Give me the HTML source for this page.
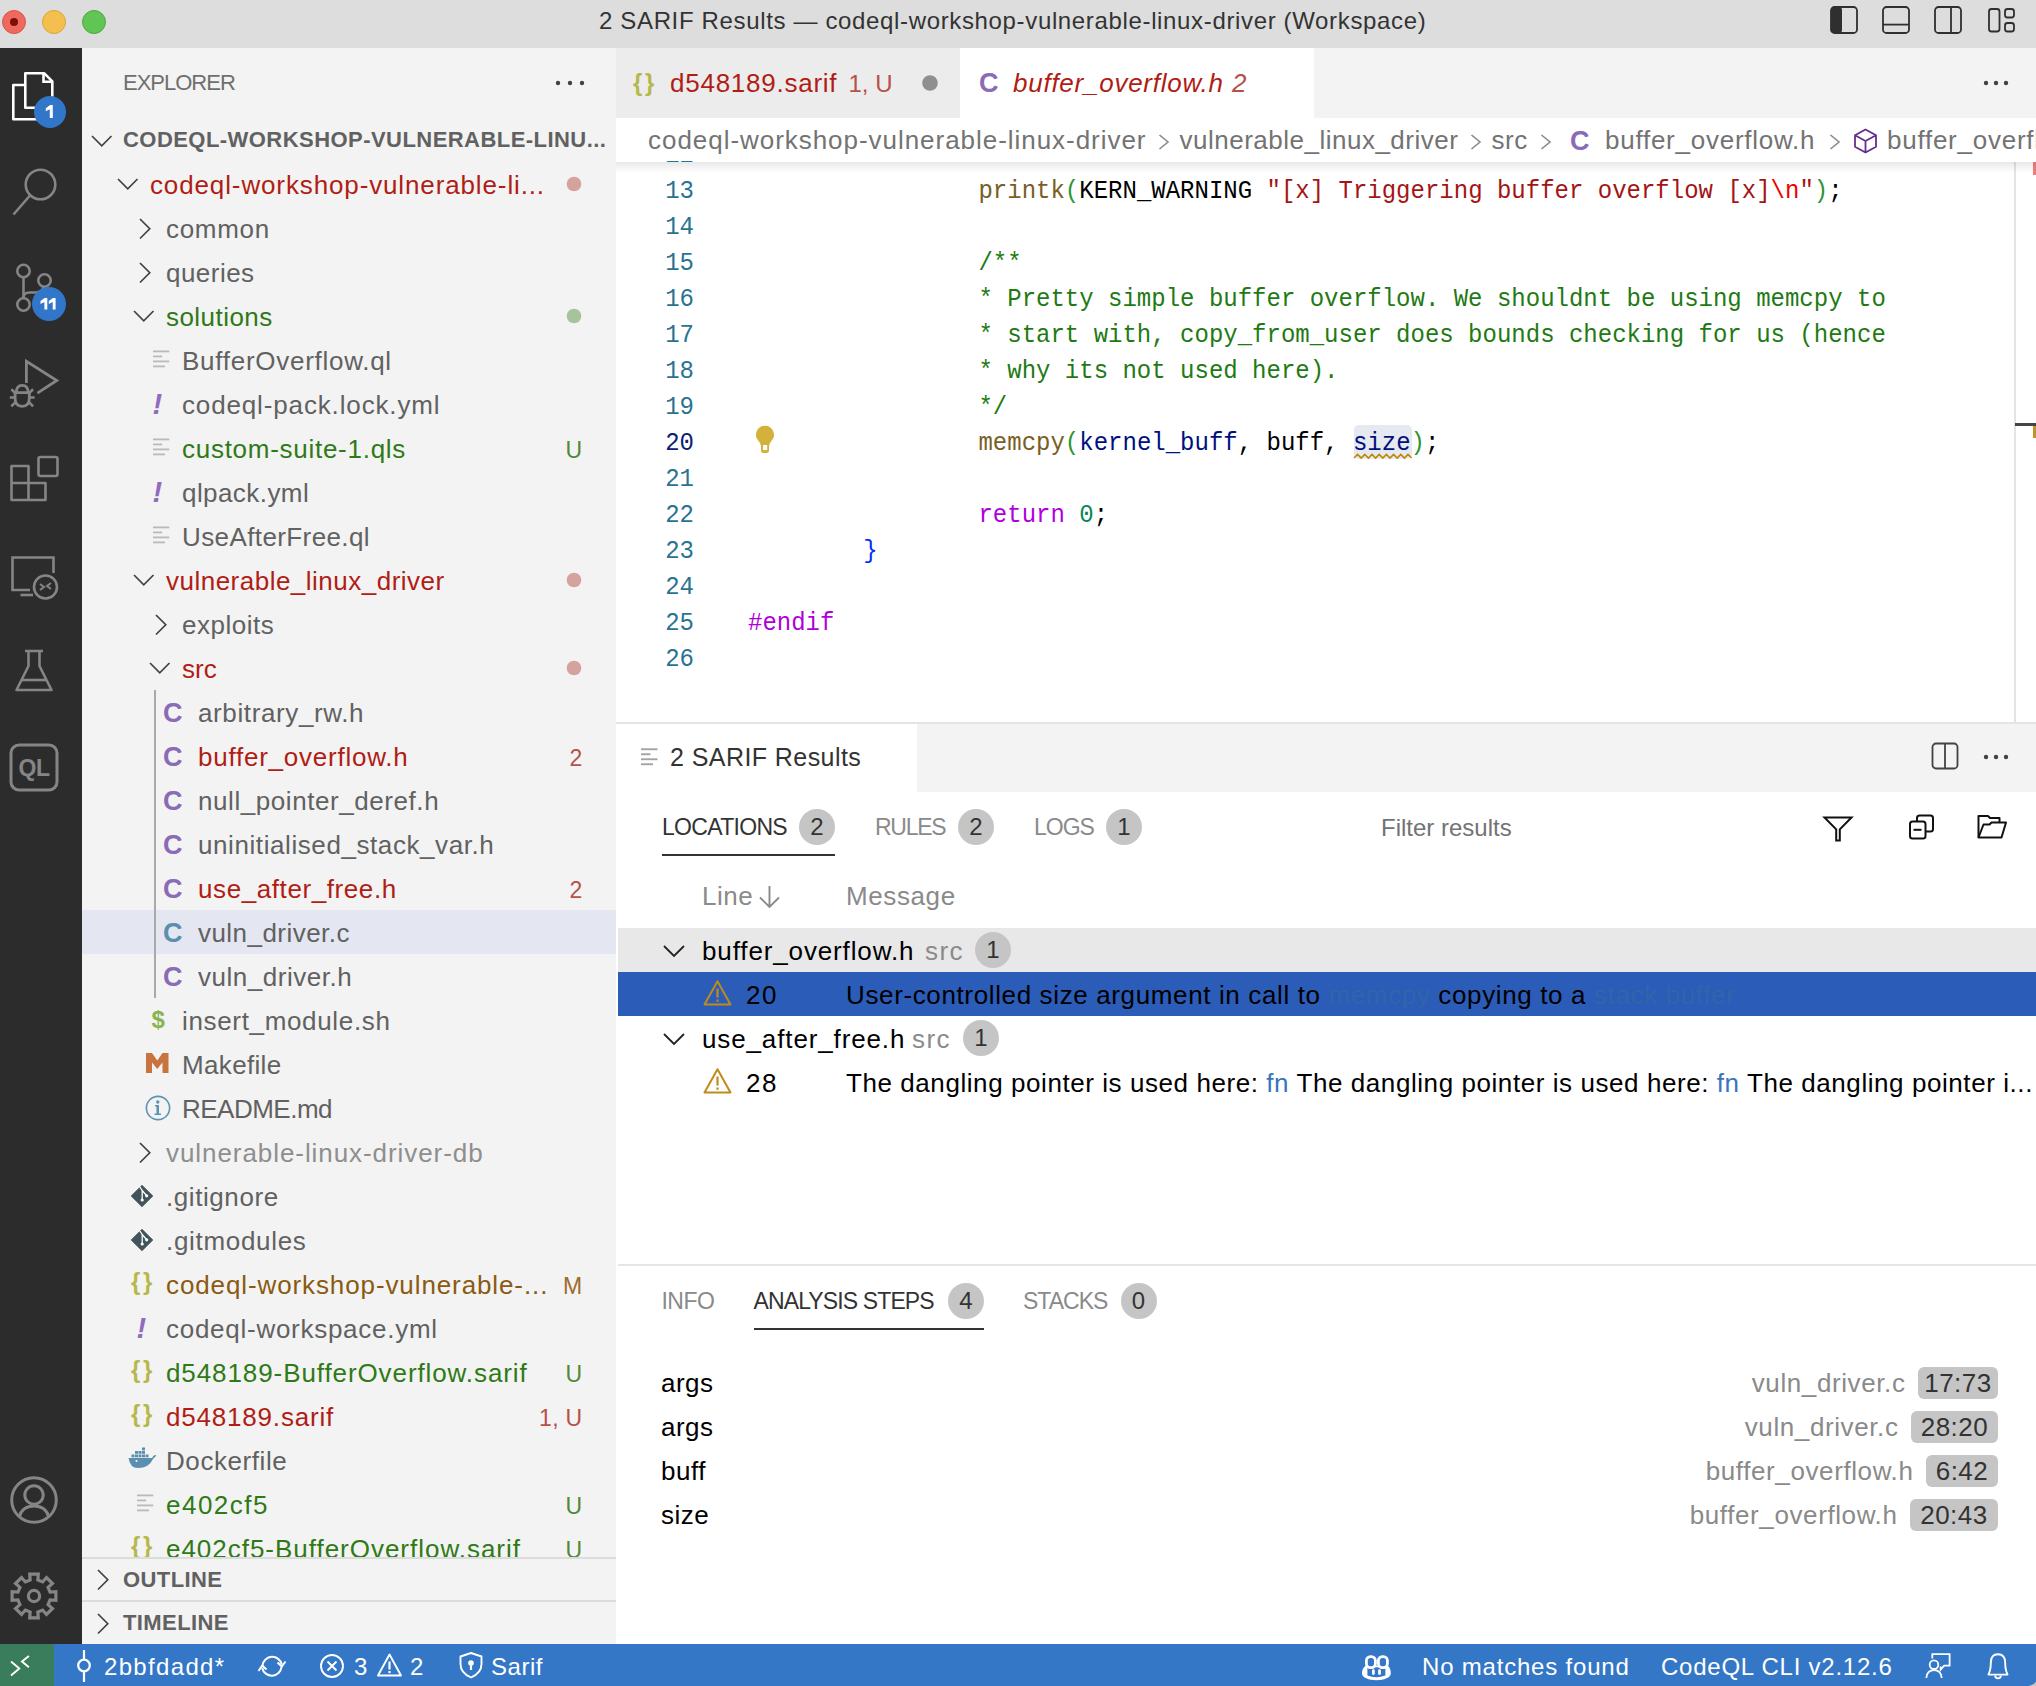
<!DOCTYPE html>
<html><head><meta charset="utf-8"><title>VS Code</title>
<style>
html,body{margin:0;padding:0;overflow:hidden;}
body{width:2036px;height:1686px;position:relative;overflow:hidden;background:#fff;font-family:"Liberation Sans",sans-serif;}
.a{position:absolute;}
.t{position:absolute;white-space:pre;line-height:1;}
svg{position:absolute;overflow:visible;}
</style></head>
<body>
<div class="a" style="left:0px;top:0px;width:2036px;height:48px;background:#dddddd;"></div>
<svg style="left:0px;top:0px;" width="120" height="48" viewBox="0 0 120 48"><circle cx="14" cy="22" r="11.5" fill="#ee6a5f" stroke="#d9544a" stroke-width="1"/><circle cx="14" cy="22" r="4" fill="#7e0f06"/><circle cx="54" cy="22" r="11.5" fill="#f5bf4f" stroke="#dba43a" stroke-width="1"/><circle cx="94" cy="22" r="11.5" fill="#61c554" stroke="#4ea83f" stroke-width="1"/></svg>
<div class="t" style="left:599px;top:8.68px;font-size:24px;color:#333333;font-family:'Liberation Sans',sans-serif;letter-spacing:0.65px;">2 SARIF Results — codeql-workshop-vulnerable-linux-driver (Workspace)</div>
<svg style="left:1820px;top:0px;" width="210" height="48" viewBox="0 0 210 48"><rect x="11" y="7" width="26" height="26" rx="3.5" fill="none" stroke="#2f2f2f" stroke-width="1.8"/><rect x="11" y="7" width="11" height="26" rx="3" fill="#2f2f2f"/><rect x="63" y="7" width="26" height="26" rx="3.5" fill="none" stroke="#2f2f2f" stroke-width="1.8"/><line x1="63" y1="24.6" x2="89" y2="24.6" stroke="#2f2f2f" stroke-width="1.8"/><rect x="115" y="7" width="26" height="26" rx="3.5" fill="none" stroke="#2f2f2f" stroke-width="1.8"/><line x1="131" y1="7" x2="131" y2="33" stroke="#2f2f2f" stroke-width="1.8"/><rect x="169" y="9" width="10.5" height="22.5" rx="2.5" fill="none" stroke="#2f2f2f" stroke-width="1.8"/><rect x="185" y="9" width="9" height="8.5" rx="2.5" fill="none" stroke="#2f2f2f" stroke-width="1.8"/><rect x="185" y="23" width="9" height="8.5" rx="2.5" fill="none" stroke="#2f2f2f" stroke-width="1.8"/></svg>
<div class="a" style="left:0px;top:48px;width:82px;height:1596px;background:#2c2c2c;"></div>
<svg style="left:0px;top:48px;" width="82" height="90" viewBox="0 0 82 90"><path d="M25.3 25.3 h19 l8 8 v26.5 h-27 z" fill="none" stroke="#fff" stroke-width="2.6" stroke-linejoin="round"/><path d="M43.5 25.3 v8.5 h8.5" fill="none" stroke="#fff" stroke-width="2.6"/><path d="M25.3 37 h-12 v34.2 h23.5 v-11.4" fill="none" stroke="#fff" stroke-width="2.6" stroke-linejoin="round"/><circle cx="50" cy="64" r="16" fill="#3176c9"/><path d="M45.8 60.3 L50.2 57 H52.8 V70 H49.8 V61.2 L45.8 63.3 Z" fill="#fff"/></svg>
<svg style="left:0px;top:150px;" width="82" height="80" viewBox="0 0 82 80"><circle cx="40.5" cy="34.5" r="14.8" fill="none" stroke="#858585" stroke-width="2.6"/><line x1="30" y1="45.5" x2="13.5" y2="64.5" stroke="#858585" stroke-width="2.6"/></svg>
<svg style="left:0px;top:250px;" width="82" height="80" viewBox="0 0 82 80"><circle cx="23.5" cy="21" r="6.2" fill="none" stroke="#858585" stroke-width="2.6"/><circle cx="44.5" cy="30.5" r="6.2" fill="none" stroke="#858585" stroke-width="2.6"/><circle cx="23.5" cy="54.5" r="6.2" fill="none" stroke="#858585" stroke-width="2.6"/><path d="M23.5 27.2 v21" stroke="#858585" stroke-width="2.6" fill="none"/><path d="M23.5 47.5 Q23.5 42.5 29.5 42.5 H36 Q42.5 42.5 43.8 36.6" stroke="#858585" stroke-width="2.6" fill="none"/><circle cx="49" cy="54" r="17" fill="#3176c9"/><path d="M40.5 51 L44.6 48 H47.3 V59.5 H44.4 V52 L40.5 54 Z M48.8 51 L52.9 48 H55.6 V59.5 H52.7 V52 L48.8 54 Z" fill="#fff"/></svg>
<svg style="left:0px;top:350px;" width="82" height="80" viewBox="0 0 82 80"><path d="M26.4 33 V11.3 L56.8 30.5 L37.4 43.2" fill="none" stroke="#858585" stroke-width="2.8" stroke-linejoin="miter"/><path d="M16.3 42.7 Q16.3 35.4 22.2 35.4 Q28.1 35.4 28.1 42.7" fill="none" stroke="#858585" stroke-width="2.8"/><path d="M15.1 42.7 V48.5 Q15.1 56.3 22.2 56.3 Q29.3 56.3 29.3 48.5 V42.7 Z" fill="none" stroke="#858585" stroke-width="2.8"/><path d="M11.3 39.3 L15.5 43.3 M33.1 39.3 L28.9 43.3 M9.8 47.5 H15 M29.4 47.5 H34.6 M11.3 56.3 L15.5 52.1 M33.1 56.3 L28.9 52.1" stroke="#858585" stroke-width="2.6" fill="none"/></svg>
<svg style="left:0px;top:440px;" width="82" height="80" viewBox="0 0 82 80"><path d="M11.5 26 h17 v17 h17 v17 h-34 z M28.5 43 h-17 M28.5 43 v17" fill="none" stroke="#858585" stroke-width="2.6" stroke-linejoin="round"/><rect x="38.5" y="17" width="19" height="19" rx="2" fill="none" stroke="#858585" stroke-width="2.6"/></svg>
<svg style="left:0px;top:540px;" width="82" height="80" viewBox="0 0 82 80"><path d="M30 50 H12.5 V17.5 H53.5 V33" fill="none" stroke="#858585" stroke-width="2.6"/><path d="M20.5 55 H33" stroke="#858585" stroke-width="2.6"/><circle cx="45.5" cy="47" r="11.5" fill="none" stroke="#858585" stroke-width="2.6"/><path d="M40 44 l4 3 l-4 3 M51 43 l-4 3 l4 3" stroke="#858585" stroke-width="2" fill="none"/></svg>
<svg style="left:0px;top:640px;" width="82" height="70" viewBox="0 0 82 70"><path d="M25 11 h18 M28.5 11 v15 L16.5 50 h35 L39.5 26 V11" fill="none" stroke="#858585" stroke-width="2.6" stroke-linejoin="round"/><path d="M22 40 h24" stroke="#858585" stroke-width="2.6"/></svg>
<svg style="left:0px;top:740px;" width="82" height="60" viewBox="0 0 82 60"><rect x="11" y="5" width="46" height="45" rx="8" fill="none" stroke="#858585" stroke-width="3"/><text x="34" y="35.5" text-anchor="middle" style="font-family:Liberation Sans;font-weight:bold;font-size:23px;letter-spacing:-0.5px" fill="#858585">QL</text></svg>
<svg style="left:0px;top:1470px;" width="82" height="60" viewBox="0 0 82 60"><circle cx="34" cy="30" r="22.3" fill="none" stroke="#858585" stroke-width="3"/><circle cx="34" cy="25" r="9.2" fill="none" stroke="#858585" stroke-width="3"/><path d="M19 47.5 q3 -11.5 15 -11.5 q12 0 15 11.5" fill="none" stroke="#858585" stroke-width="3"/></svg>
<svg style="left:0px;top:1566px;" width="82" height="60" viewBox="0 0 82 60"><path d="M29.74,8.11 L38.26,8.11 L37.85,13.96 L42.62,15.93 L46.47,11.51 L52.49,17.53 L48.07,21.38 L50.04,26.15 L55.89,25.74 L55.89,34.26 L50.04,33.85 L48.07,38.62 L52.49,42.47 L46.47,48.49 L42.62,44.07 L37.85,46.04 L38.26,51.89 L29.74,51.89 L30.15,46.04 L25.38,44.07 L21.53,48.49 L15.51,42.47 L19.93,38.62 L17.96,33.85 L12.11,34.26 L12.11,25.74 L17.96,26.15 L19.93,21.38 L15.51,17.53 L21.53,11.51 L25.38,15.93 L30.15,13.96 Z" fill="none" stroke="#858585" stroke-width="3.2" stroke-linejoin="miter"/><circle cx="34" cy="30" r="5.6" fill="none" stroke="#858585" stroke-width="3.2"/></svg>
<div class="a" style="left:82px;top:48px;width:534px;height:1596px;background:#f3f3f3;"></div>
<div class="t" style="left:123px;top:72.38px;font-size:22px;color:#6f6f6f;font-family:'Liberation Sans',sans-serif;letter-spacing:-1.0px;">EXPLORER</div>
<svg style="left:550px;top:75px;" width="40" height="16" viewBox="0 0 40 16"><circle cx="8" cy="8" r="2.2" fill="#424242"/><circle cx="20" cy="8" r="2.2" fill="#424242"/><circle cx="32" cy="8" r="2.2" fill="#424242"/></svg>
<svg style="left:90.25px;top:133.825px;" width="23.5" height="13.75" viewBox="0 0 23.5 13.75"><polyline points="2,2 11.75,11.75 21.5,2" fill="none" stroke="#424242" stroke-width="1.7"/></svg>
<div class="t" style="left:123px;top:129.38px;font-size:22px;color:#616161;font-family:'Liberation Sans',sans-serif;font-weight:bold;letter-spacing:0.45px;">CODEQL-WORKSHOP-VULNERABLE-LINU...</div>
<div class="a" style="left:82px;top:162px;width:534px;height:1395px;overflow:hidden;"><div class="a" style="left:-82px;top:-162px;width:2036px;height:1686px;"><div class="a" style="left:82px;top:910px;width:534px;height:44px;background:#e4e6f1;"></div>
<div class="a" style="left:154px;top:690px;width:2px;height:308px;background:#a9a9a9;"></div>
<svg style="left:116.25px;top:176.625px;" width="23.5" height="13.75" viewBox="0 0 23.5 13.75"><polyline points="2,2 11.75,11.75 21.5,2" fill="none" stroke="#424242" stroke-width="1.7"/></svg>
<div class="t" style="left:150px;top:171.99px;font-size:26px;color:#b01d15;font-family:'Liberation Sans',sans-serif;letter-spacing:0.872px;">codeql-workshop-vulnerable-li...</div>
<svg style="left:566px;top:176px;" width="16" height="16" viewBox="0 0 16 16"><circle cx="8" cy="8" r="7.3" fill="#d6a29d"/></svg>
<svg style="left:138.125px;top:216.75px;" width="13.75" height="23.5" viewBox="0 0 13.75 23.5"><polyline points="2,2 11.75,11.75 2,21.5" fill="none" stroke="#424242" stroke-width="1.7"/></svg>
<div class="t" style="left:166px;top:215.99px;font-size:26px;color:#616161;font-family:'Liberation Sans',sans-serif;letter-spacing:0.7px;">common</div>
<svg style="left:138.125px;top:260.75px;" width="13.75" height="23.5" viewBox="0 0 13.75 23.5"><polyline points="2,2 11.75,11.75 2,21.5" fill="none" stroke="#424242" stroke-width="1.7"/></svg>
<div class="t" style="left:166px;top:259.99px;font-size:26px;color:#616161;font-family:'Liberation Sans',sans-serif;letter-spacing:0.473px;">queries</div>
<svg style="left:132.25px;top:308.625px;" width="23.5" height="13.75" viewBox="0 0 23.5 13.75"><polyline points="2,2 11.75,11.75 21.5,2" fill="none" stroke="#424242" stroke-width="1.7"/></svg>
<div class="t" style="left:166px;top:303.99px;font-size:26px;color:#2f7a16;font-family:'Liberation Sans',sans-serif;letter-spacing:0.453px;">solutions</div>
<svg style="left:566px;top:308px;" width="16" height="16" viewBox="0 0 16 16"><circle cx="8" cy="8" r="7.3" fill="#a6c49b"/></svg>
<svg style="left:153px;top:350px;" width="17" height="18" viewBox="0 0 17 18"><g fill="#b9b9b9"><rect x="0" y="0.5" width="16.3" height="1.8"/><rect x="0" y="5.5" width="9" height="1.8"/><rect x="0" y="10.5" width="16.3" height="1.8"/><rect x="0" y="15.5" width="12" height="1.8"/></g></svg>
<div class="t" style="left:182px;top:347.99px;font-size:26px;color:#616161;font-family:'Liberation Sans',sans-serif;letter-spacing:0.728px;">BufferOverflow.ql</div>
<div class="t" style="left:152.5px;top:389.95px;font-size:29px;color:#8f6cc0;font-family:'Liberation Sans',sans-serif;font-weight:bold;font-style:italic;">!</div>
<div class="t" style="left:182px;top:391.99px;font-size:26px;color:#616161;font-family:'Liberation Sans',sans-serif;letter-spacing:0.856px;">codeql-pack.lock.yml</div>
<svg style="left:153px;top:438px;" width="17" height="18" viewBox="0 0 17 18"><g fill="#b9b9b9"><rect x="0" y="0.5" width="16.3" height="1.8"/><rect x="0" y="5.5" width="9" height="1.8"/><rect x="0" y="10.5" width="16.3" height="1.8"/><rect x="0" y="15.5" width="12" height="1.8"/></g></svg>
<div class="t" style="left:182px;top:435.99px;font-size:26px;color:#2f7a16;font-family:'Liberation Sans',sans-serif;letter-spacing:0.728px;">custom-suite-1.qls</div>
<div class="t" style="right:1453.5px;top:438.53px;font-size:23px;color:#4d8a3a;letter-spacing:0.3px;">U</div>
<div class="t" style="left:152.5px;top:477.95px;font-size:29px;color:#8f6cc0;font-family:'Liberation Sans',sans-serif;font-weight:bold;font-style:italic;">!</div>
<div class="t" style="left:182px;top:479.99px;font-size:26px;color:#616161;font-family:'Liberation Sans',sans-serif;letter-spacing:0.429px;">qlpack.yml</div>
<svg style="left:153px;top:526px;" width="17" height="18" viewBox="0 0 17 18"><g fill="#b9b9b9"><rect x="0" y="0.5" width="16.3" height="1.8"/><rect x="0" y="5.5" width="9" height="1.8"/><rect x="0" y="10.5" width="16.3" height="1.8"/><rect x="0" y="15.5" width="12" height="1.8"/></g></svg>
<div class="t" style="left:182px;top:523.99px;font-size:26px;color:#616161;font-family:'Liberation Sans',sans-serif;letter-spacing:0.397px;">UseAfterFree.ql</div>
<svg style="left:132.25px;top:572.625px;" width="23.5" height="13.75" viewBox="0 0 23.5 13.75"><polyline points="2,2 11.75,11.75 21.5,2" fill="none" stroke="#424242" stroke-width="1.7"/></svg>
<div class="t" style="left:166px;top:567.99px;font-size:26px;color:#b01d15;font-family:'Liberation Sans',sans-serif;letter-spacing:0.49px;">vulnerable_linux_driver</div>
<svg style="left:566px;top:572px;" width="16" height="16" viewBox="0 0 16 16"><circle cx="8" cy="8" r="7.3" fill="#d6a29d"/></svg>
<svg style="left:154.125px;top:612.75px;" width="13.75" height="23.5" viewBox="0 0 13.75 23.5"><polyline points="2,2 11.75,11.75 2,21.5" fill="none" stroke="#424242" stroke-width="1.7"/></svg>
<div class="t" style="left:182px;top:611.99px;font-size:26px;color:#616161;font-family:'Liberation Sans',sans-serif;letter-spacing:0.511px;">exploits</div>
<svg style="left:148.25px;top:660.625px;" width="23.5" height="13.75" viewBox="0 0 23.5 13.75"><polyline points="2,2 11.75,11.75 21.5,2" fill="none" stroke="#424242" stroke-width="1.7"/></svg>
<div class="t" style="left:182px;top:655.99px;font-size:26px;color:#b01d15;font-family:'Liberation Sans',sans-serif;letter-spacing:0.09px;">src</div>
<svg style="left:566px;top:660px;" width="16" height="16" viewBox="0 0 16 16"><circle cx="8" cy="8" r="7.3" fill="#d6a29d"/></svg>
<div class="t" style="left:163.0px;top:700.14px;font-size:27px;color:#8a6bb5;font-family:'Liberation Sans',sans-serif;font-weight:bold;">C</div>
<div class="t" style="left:198px;top:699.99px;font-size:26px;color:#616161;font-family:'Liberation Sans',sans-serif;letter-spacing:0.617px;">arbitrary_rw.h</div>
<div class="t" style="left:163.0px;top:744.14px;font-size:27px;color:#8a6bb5;font-family:'Liberation Sans',sans-serif;font-weight:bold;">C</div>
<div class="t" style="left:198px;top:743.99px;font-size:26px;color:#b01d15;font-family:'Liberation Sans',sans-serif;letter-spacing:0.765px;">buffer_overflow.h</div>
<div class="t" style="right:1453.5px;top:746.53px;font-size:23px;color:#b5514a;letter-spacing:0.3px;">2</div>
<div class="t" style="left:163.0px;top:788.14px;font-size:27px;color:#8a6bb5;font-family:'Liberation Sans',sans-serif;font-weight:bold;">C</div>
<div class="t" style="left:198px;top:787.99px;font-size:26px;color:#616161;font-family:'Liberation Sans',sans-serif;letter-spacing:0.566px;">null_pointer_deref.h</div>
<div class="t" style="left:163.0px;top:832.14px;font-size:27px;color:#8a6bb5;font-family:'Liberation Sans',sans-serif;font-weight:bold;">C</div>
<div class="t" style="left:198px;top:831.99px;font-size:26px;color:#616161;font-family:'Liberation Sans',sans-serif;letter-spacing:0.582px;">uninitialised_stack_var.h</div>
<div class="t" style="left:163.0px;top:876.14px;font-size:27px;color:#8a6bb5;font-family:'Liberation Sans',sans-serif;font-weight:bold;">C</div>
<div class="t" style="left:198px;top:875.99px;font-size:26px;color:#b01d15;font-family:'Liberation Sans',sans-serif;letter-spacing:0.587px;">use_after_free.h</div>
<div class="t" style="right:1453.5px;top:878.53px;font-size:23px;color:#b5514a;letter-spacing:0.3px;">2</div>
<div class="t" style="left:163.0px;top:920.14px;font-size:27px;color:#5a8fad;font-family:'Liberation Sans',sans-serif;font-weight:bold;">C</div>
<div class="t" style="left:198px;top:919.99px;font-size:26px;color:#616161;font-family:'Liberation Sans',sans-serif;letter-spacing:0.457px;">vuln_driver.c</div>
<div class="t" style="left:163.0px;top:964.14px;font-size:27px;color:#8a6bb5;font-family:'Liberation Sans',sans-serif;font-weight:bold;">C</div>
<div class="t" style="left:198px;top:963.99px;font-size:26px;color:#616161;font-family:'Liberation Sans',sans-serif;letter-spacing:0.532px;">vuln_driver.h</div>
<div class="t" style="left:151.5px;top:1007.68px;font-size:24px;color:#89b350;font-family:'Liberation Sans',sans-serif;font-weight:bold;">$</div>
<div class="t" style="left:182px;top:1007.99px;font-size:26px;color:#616161;font-family:'Liberation Sans',sans-serif;letter-spacing:0.66px;">insert_module.sh</div>
<svg style="left:146.2px;top:1052.5px;" width="22.5" height="20" viewBox="0 0 22.5 20"><path d="M0 20 V0 H6 L11.25 7.5 L16.5 0 H22.5 V20 H16.5 V9.5 L11.25 16 L6 9.5 V20 Z" fill="#c8743e"/></svg>
<div class="t" style="left:182px;top:1051.99px;font-size:26px;color:#616161;font-family:'Liberation Sans',sans-serif;letter-spacing:0.34px;">Makefile</div>
<svg style="left:144.5px;top:1095px;" width="26" height="26" viewBox="0 0 26 26"><circle cx="13" cy="13" r="11.6" fill="none" stroke="#5b93b4" stroke-width="1.6"/><circle cx="12.8" cy="7" r="1.7" fill="#5b93b4"/><path d="M10 10 h4 v8.5 h2 v1.5 h-6.5 v-1.5 h2 v-7 h-1.5 z" fill="#5b93b4"/></svg>
<div class="t" style="left:182px;top:1095.99px;font-size:26px;color:#616161;font-family:'Liberation Sans',sans-serif;letter-spacing:-0.51px;">README.md</div>
<svg style="left:138.125px;top:1140.75px;" width="13.75" height="23.5" viewBox="0 0 13.75 23.5"><polyline points="2,2 11.75,11.75 2,21.5" fill="none" stroke="#424242" stroke-width="1.7"/></svg>
<div class="t" style="left:166px;top:1139.99px;font-size:26px;color:#8e8e8e;font-family:'Liberation Sans',sans-serif;letter-spacing:0.932px;">vulnerable-linux-driver-db</div>
<svg style="left:130.5px;top:1184.5px;" width="22" height="22" viewBox="0 0 22 22"><path d="M11 0.2 L21.8 11 L11 21.8 L0.2 11 Z" fill="#41535b" stroke="#41535b" stroke-width="0.8" stroke-linejoin="round"/><path d="M8.5 1.5 L11.2 5.5 V15" stroke="#fff" stroke-width="1.3" fill="none"/><path d="M11.2 5.5 L15.5 10.5" stroke="#fff" stroke-width="1.3"/><circle cx="11.2" cy="15" r="1.6" fill="#fff"/><circle cx="15.7" cy="10.8" r="1.6" fill="#fff"/></svg>
<div class="t" style="left:166px;top:1183.99px;font-size:26px;color:#616161;font-family:'Liberation Sans',sans-serif;letter-spacing:0.573px;">.gitignore</div>
<svg style="left:130.5px;top:1228.5px;" width="22" height="22" viewBox="0 0 22 22"><path d="M11 0.2 L21.8 11 L11 21.8 L0.2 11 Z" fill="#41535b" stroke="#41535b" stroke-width="0.8" stroke-linejoin="round"/><path d="M8.5 1.5 L11.2 5.5 V15" stroke="#fff" stroke-width="1.3" fill="none"/><path d="M11.2 5.5 L15.5 10.5" stroke="#fff" stroke-width="1.3"/><circle cx="11.2" cy="15" r="1.6" fill="#fff"/><circle cx="15.7" cy="10.8" r="1.6" fill="#fff"/></svg>
<div class="t" style="left:166px;top:1227.99px;font-size:26px;color:#616161;font-family:'Liberation Sans',sans-serif;letter-spacing:0.69px;">.gitmodules</div>
<div class="t" style="left:131.0px;top:1270.18px;font-size:24px;color:#b5b84a;font-family:'Liberation Sans',sans-serif;font-weight:bold;letter-spacing:-2px;">{ }</div>
<div class="t" style="left:166px;top:1271.99px;font-size:26px;color:#8a5a12;font-family:'Liberation Sans',sans-serif;letter-spacing:0.892px;">codeql-workshop-vulnerable-...</div>
<div class="t" style="right:1453.5px;top:1274.53px;font-size:23px;color:#9b6c2e;letter-spacing:0.3px;">M</div>
<div class="t" style="left:136.5px;top:1313.95px;font-size:29px;color:#8f6cc0;font-family:'Liberation Sans',sans-serif;font-weight:bold;font-style:italic;">!</div>
<div class="t" style="left:166px;top:1315.99px;font-size:26px;color:#616161;font-family:'Liberation Sans',sans-serif;letter-spacing:0.729px;">codeql-workspace.yml</div>
<div class="t" style="left:131.0px;top:1358.18px;font-size:24px;color:#b5b84a;font-family:'Liberation Sans',sans-serif;font-weight:bold;letter-spacing:-2px;">{ }</div>
<div class="t" style="left:166px;top:1359.99px;font-size:26px;color:#2f7a16;font-family:'Liberation Sans',sans-serif;letter-spacing:0.907px;">d548189-BufferOverflow.sarif</div>
<div class="t" style="right:1453.5px;top:1362.53px;font-size:23px;color:#4d8a3a;letter-spacing:0.3px;">U</div>
<div class="t" style="left:131.0px;top:1402.18px;font-size:24px;color:#b5b84a;font-family:'Liberation Sans',sans-serif;font-weight:bold;letter-spacing:-2px;">{ }</div>
<div class="t" style="left:166px;top:1403.99px;font-size:26px;color:#b01d15;font-family:'Liberation Sans',sans-serif;letter-spacing:0.807px;">d548189.sarif</div>
<div class="t" style="right:1453.5px;top:1406.53px;font-size:23px;color:#b5514a;letter-spacing:0.3px;">1, U</div>
<svg style="left:127.5px;top:1448px;" width="30" height="22" viewBox="0 0 30 22"><g fill="#5a8fb0"><path d="M0.5 10 H24 Q26 6 28.5 7.5 Q26 9.5 25 11 Q21 20 10 20 Q2 20 0.5 10 Z"/><rect x="3.5" y="6.5" width="3" height="2.8"/><rect x="7" y="6.5" width="3" height="2.8"/><rect x="10.5" y="6.5" width="3" height="2.8"/><rect x="14" y="6.5" width="3" height="2.8"/><rect x="17.5" y="6.5" width="3" height="2.8"/><rect x="7" y="3" width="3" height="2.8"/><rect x="10.5" y="3" width="3" height="2.8"/><rect x="14" y="3" width="3" height="2.8"/><rect x="14" y="-0.5" width="3" height="2.8"/></g><circle cx="8.5" cy="13" r="1" fill="#fff"/></svg>
<div class="t" style="left:166px;top:1447.99px;font-size:26px;color:#616161;font-family:'Liberation Sans',sans-serif;letter-spacing:0.573px;">Dockerfile</div>
<svg style="left:137px;top:1494px;" width="17" height="18" viewBox="0 0 17 18"><g fill="#b9b9b9"><rect x="0" y="0.5" width="16.3" height="1.8"/><rect x="0" y="5.5" width="9" height="1.8"/><rect x="0" y="10.5" width="16.3" height="1.8"/><rect x="0" y="15.5" width="12" height="1.8"/></g></svg>
<div class="t" style="left:166px;top:1491.99px;font-size:26px;color:#2f7a16;font-family:'Liberation Sans',sans-serif;letter-spacing:1.49px;">e402cf5</div>
<div class="t" style="right:1453.5px;top:1494.53px;font-size:23px;color:#4d8a3a;letter-spacing:0.3px;">U</div>
<div class="t" style="left:131.0px;top:1534.18px;font-size:24px;color:#b5b84a;font-family:'Liberation Sans',sans-serif;font-weight:bold;letter-spacing:-2px;">{ }</div>
<div class="t" style="left:166px;top:1535.99px;font-size:26px;color:#2f7a16;font-family:'Liberation Sans',sans-serif;letter-spacing:0.977px;">e402cf5-BufferOverflow.sarif</div>
<div class="t" style="right:1453.5px;top:1538.53px;font-size:23px;color:#4d8a3a;letter-spacing:0.3px;">U</div>
</div></div>
<div class="a" style="left:82px;top:1556.5px;width:534px;height:2px;background:#dcdcdc;"></div>
<div class="a" style="left:82px;top:1600px;width:534px;height:2px;background:#dcdcdc;"></div>
<svg style="left:96.125px;top:1568.25px;" width="13.75" height="23.5" viewBox="0 0 13.75 23.5"><polyline points="2,2 11.75,11.75 2,21.5" fill="none" stroke="#424242" stroke-width="1.7"/></svg>
<div class="t" style="left:123px;top:1568.88px;font-size:22px;color:#616161;font-family:'Liberation Sans',sans-serif;font-weight:bold;letter-spacing:0.4px;">OUTLINE</div>
<svg style="left:96.125px;top:1612.25px;" width="13.75" height="23.5" viewBox="0 0 13.75 23.5"><polyline points="2,2 11.75,11.75 2,21.5" fill="none" stroke="#424242" stroke-width="1.7"/></svg>
<div class="t" style="left:123px;top:1612.38px;font-size:22px;color:#616161;font-family:'Liberation Sans',sans-serif;font-weight:bold;letter-spacing:0.4px;">TIMELINE</div>
<div class="a" style="left:616px;top:48px;width:1420px;height:70px;background:#f3f3f3;"></div>
<div class="a" style="left:616px;top:48px;width:344px;height:70px;background:#ececec;"></div>
<div class="a" style="left:960px;top:48px;width:354px;height:70px;background:#ffffff;"></div>
<div class="t" style="left:633px;top:71.18px;font-size:24px;color:#b5b84a;font-family:'Liberation Sans',sans-serif;font-weight:bold;letter-spacing:-2px;">{ }</div>
<div class="t" style="left:670px;top:70.49px;font-size:26px;color:#b01d15;font-family:'Liberation Sans',sans-serif;letter-spacing:0.75px;">d548189.sarif</div>
<div class="t" style="left:848.5px;top:72.18px;font-size:24px;color:#b5514a;font-family:'Liberation Sans',sans-serif;">1, U</div>
<svg style="left:922px;top:75px;" width="16" height="16" viewBox="0 0 16 16"><circle cx="8" cy="8" r="7.8" fill="#8f8f8f"/></svg>
<div class="t" style="left:979px;top:69.64px;font-size:27px;color:#8a6bb5;font-family:'Liberation Sans',sans-serif;font-weight:bold;">C</div>
<div class="t" style="left:1013px;top:70.49px;font-size:26px;color:#b01d15;font-family:'Liberation Sans',sans-serif;font-style:italic;letter-spacing:0.75px;">buffer_overflow.h</div>
<div class="t" style="left:1232px;top:70.49px;font-size:26px;color:#b5514a;font-family:'Liberation Sans',sans-serif;font-style:italic;">2</div>
<svg style="left:1980px;top:77px;" width="40" height="12" viewBox="0 0 40 12"><circle cx="6" cy="6" r="2.2" fill="#424242"/><circle cx="16" cy="6" r="2.2" fill="#424242"/><circle cx="26" cy="6" r="2.2" fill="#424242"/></svg>
<div class="a" style="left:616px;top:118px;width:1420px;height:44px;background:#ffffff;"></div>
<div class="t" style="left:648px;top:127.49px;font-size:26px;color:#737373;font-family:'Liberation Sans',sans-serif;letter-spacing:0.96px;">codeql-workshop-vulnerable-linux-driver</div>
<svg style="left:1158px;top:134px;" width="12" height="16" viewBox="0 0 12 16"><polyline points="1.5,1 10,8 1.5,15" fill="none" stroke="#8a8a8a" stroke-width="1.6"/></svg>
<div class="t" style="left:1179.5px;top:127.49px;font-size:26px;color:#737373;font-family:'Liberation Sans',sans-serif;letter-spacing:0.5px;">vulnerable_linux_driver</div>
<svg style="left:1470px;top:134px;" width="12" height="16" viewBox="0 0 12 16"><polyline points="1.5,1 10,8 1.5,15" fill="none" stroke="#8a8a8a" stroke-width="1.6"/></svg>
<div class="t" style="left:1491.5px;top:127.49px;font-size:26px;color:#737373;font-family:'Liberation Sans',sans-serif;letter-spacing:0.6px;">src</div>
<svg style="left:1540px;top:134px;" width="12" height="16" viewBox="0 0 12 16"><polyline points="1.5,1 10,8 1.5,15" fill="none" stroke="#8a8a8a" stroke-width="1.6"/></svg>
<div class="t" style="left:1570px;top:127.64px;font-size:27px;color:#8a6bb5;font-family:'Liberation Sans',sans-serif;font-weight:bold;">C</div>
<svg style="left:1829px;top:134px;" width="12" height="16" viewBox="0 0 12 16"><polyline points="1.5,1 10,8 1.5,15" fill="none" stroke="#8a8a8a" stroke-width="1.6"/></svg>
<div class="t" style="left:1605px;top:127.49px;font-size:26px;color:#737373;font-family:'Liberation Sans',sans-serif;letter-spacing:0.75px;">buffer_overflow.h</div>
<svg style="left:1853px;top:128px;" width="26" height="26" viewBox="0 0 26 26"><path d="M12.5 1.5 L23 7.3 V18.7 L12.5 24.5 L2 18.7 V7.3 Z M2 7.3 L12.5 13 L23 7.3 M12.5 13 V24.5" fill="none" stroke="#652d90" stroke-width="1.8" stroke-linejoin="round"/></svg>
<div class="t" style="left:1887px;top:127.49px;font-size:26px;color:#737373;font-family:'Liberation Sans',sans-serif;letter-spacing:0.75px;">buffer_overflow_write</div>
<div class="a" style="left:616px;top:161px;width:1420px;height:561px;overflow:hidden;"><div class="a" style="left:-616px;top:-161px;width:2036px;height:1686px;"><div class="a" style="left:616px;top:162px;width:1420px;height:560px;background:#ffffff;"></div>
<div class="a" style="left:1354px;top:424.5px;width:57.5px;height:34.5px;background:#e6e9ef;border-radius:5px;"></div>
<div class="t" style="right:1342px;top:143.60px;font-size:24px;font-family:'Liberation Mono',monospace;color:#2a7391;transform:scaleY(1.1);transform-origin:0 18.4px">12</div>
<div class="t" style="right:1342px;top:179.60px;font-size:24px;font-family:'Liberation Mono',monospace;color:#2a7391;transform:scaleY(1.1);transform-origin:0 18.4px">13</div>
<div class="t" style="left:748px;top:179.60px;font-size:24px;color:#000000;font-family:'Liberation Mono',monospace;transform:scaleY(1.1);transform-origin:0 18.4px;">                <span style="color:#795e26">printk</span><span style="color:#319331">(</span><span style="color:#000000">KERN_WARNING</span> <span style="color:#a31515">"[x] Triggering buffer overflow [x]</span><span style="color:#ee0000">\n</span><span style="color:#a31515">"</span><span style="color:#319331">)</span><span style="color:#000000">;</span></div>
<div class="t" style="right:1342px;top:215.60px;font-size:24px;font-family:'Liberation Mono',monospace;color:#2a7391;transform:scaleY(1.1);transform-origin:0 18.4px">14</div>
<div class="t" style="right:1342px;top:251.60px;font-size:24px;font-family:'Liberation Mono',monospace;color:#2a7391;transform:scaleY(1.1);transform-origin:0 18.4px">15</div>
<div class="t" style="left:748px;top:251.60px;font-size:24px;color:#000000;font-family:'Liberation Mono',monospace;transform:scaleY(1.1);transform-origin:0 18.4px;">                <span style="color:#1f7a14">/**</span></div>
<div class="t" style="right:1342px;top:287.60px;font-size:24px;font-family:'Liberation Mono',monospace;color:#2a7391;transform:scaleY(1.1);transform-origin:0 18.4px">16</div>
<div class="t" style="left:748px;top:287.60px;font-size:24px;color:#000000;font-family:'Liberation Mono',monospace;transform:scaleY(1.1);transform-origin:0 18.4px;">                <span style="color:#1f7a14">* Pretty simple buffer overflow. We shouldnt be using memcpy to</span></div>
<div class="t" style="right:1342px;top:323.60px;font-size:24px;font-family:'Liberation Mono',monospace;color:#2a7391;transform:scaleY(1.1);transform-origin:0 18.4px">17</div>
<div class="t" style="left:748px;top:323.60px;font-size:24px;color:#000000;font-family:'Liberation Mono',monospace;transform:scaleY(1.1);transform-origin:0 18.4px;">                <span style="color:#1f7a14">* start with, copy_from_user does bounds checking for us (hence</span></div>
<div class="t" style="right:1342px;top:359.60px;font-size:24px;font-family:'Liberation Mono',monospace;color:#2a7391;transform:scaleY(1.1);transform-origin:0 18.4px">18</div>
<div class="t" style="left:748px;top:359.60px;font-size:24px;color:#000000;font-family:'Liberation Mono',monospace;transform:scaleY(1.1);transform-origin:0 18.4px;">                <span style="color:#1f7a14">* why its not used here).</span></div>
<div class="t" style="right:1342px;top:395.60px;font-size:24px;font-family:'Liberation Mono',monospace;color:#2a7391;transform:scaleY(1.1);transform-origin:0 18.4px">19</div>
<div class="t" style="left:748px;top:395.60px;font-size:24px;color:#000000;font-family:'Liberation Mono',monospace;transform:scaleY(1.1);transform-origin:0 18.4px;">                <span style="color:#1f7a14">*/</span></div>
<div class="t" style="right:1342px;top:431.60px;font-size:24px;font-family:'Liberation Mono',monospace;color:#0b216f;transform:scaleY(1.1);transform-origin:0 18.4px">20</div>
<div class="t" style="left:748px;top:431.60px;font-size:24px;color:#000000;font-family:'Liberation Mono',monospace;transform:scaleY(1.1);transform-origin:0 18.4px;">                <span style="color:#795e26">memcpy</span><span style="color:#319331">(</span><span style="color:#001080">kernel_buff</span><span style="color:#000000">, buff, </span><span style="color:#001080">size</span><span style="color:#319331">)</span><span style="color:#000000">;</span></div>
<div class="t" style="right:1342px;top:467.60px;font-size:24px;font-family:'Liberation Mono',monospace;color:#2a7391;transform:scaleY(1.1);transform-origin:0 18.4px">21</div>
<div class="t" style="right:1342px;top:503.60px;font-size:24px;font-family:'Liberation Mono',monospace;color:#2a7391;transform:scaleY(1.1);transform-origin:0 18.4px">22</div>
<div class="t" style="left:748px;top:503.60px;font-size:24px;color:#000000;font-family:'Liberation Mono',monospace;transform:scaleY(1.1);transform-origin:0 18.4px;">                <span style="color:#af00db">return</span> <span style="color:#098658">0</span><span style="color:#000000">;</span></div>
<div class="t" style="right:1342px;top:539.60px;font-size:24px;font-family:'Liberation Mono',monospace;color:#2a7391;transform:scaleY(1.1);transform-origin:0 18.4px">23</div>
<div class="t" style="left:748px;top:539.60px;font-size:24px;color:#000000;font-family:'Liberation Mono',monospace;transform:scaleY(1.1);transform-origin:0 18.4px;">        <span style="color:#0431fa">}</span></div>
<div class="t" style="right:1342px;top:575.60px;font-size:24px;font-family:'Liberation Mono',monospace;color:#2a7391;transform:scaleY(1.1);transform-origin:0 18.4px">24</div>
<div class="t" style="right:1342px;top:611.60px;font-size:24px;font-family:'Liberation Mono',monospace;color:#2a7391;transform:scaleY(1.1);transform-origin:0 18.4px">25</div>
<div class="t" style="left:748px;top:611.60px;font-size:24px;color:#000000;font-family:'Liberation Mono',monospace;transform:scaleY(1.1);transform-origin:0 18.4px;"><span style="color:#af00db">#endif</span></div>
<div class="t" style="right:1342px;top:647.60px;font-size:24px;font-family:'Liberation Mono',monospace;color:#2a7391;transform:scaleY(1.1);transform-origin:0 18.4px">26</div>
<svg style="left:1354px;top:454px;" width="58" height="6" viewBox="0 0 58 6"><path d="M0 4 l3.6 -3.6 l3.6 3.6 l3.6 -3.6 l3.6 3.6 l3.6 -3.6 l3.6 3.6 l3.6 -3.6 l3.6 3.6 l3.6 -3.6 l3.6 3.6 l3.6 -3.6 l3.6 3.6 l3.6 -3.6 l3.6 3.6 l3.6 -3.6 l3.6 3.6" fill="none" stroke="#bf8803" stroke-width="1.6"/></svg>
<svg style="left:754px;top:424px;" width="22" height="30" viewBox="0 0 22 30"><path d="M11 1.8 a9 9 0 0 1 6.2 15.5 q-2 2.3 -2.2 5.5 v4 q0 2.2 -2.2 2.2 h-3.6 q-2.2 0 -2.2 -2.2 v-4 q-0.2 -3.2 -2.2 -5.5 A9 9 0 0 1 11 1.8 Z" fill="#d4b13a"/><rect x="9" y="21" width="4.2" height="5" fill="#fff"/></svg>
<div class="a" style="left:2014px;top:162px;width:1.5px;height:560px;background:#e3e3e3;"></div>
<div class="a" style="left:2033px;top:162px;width:3px;height:13px;background:#f08080;"></div>
<div class="a" style="left:2015px;top:422.5px;width:21px;height:3.5px;background:#444444;"></div>
<div class="a" style="left:2033px;top:426px;width:3px;height:12px;background:#c0942a;"></div>
</div></div>
<div class="a" style="left:616px;top:162px;width:1420px;height:11px;background:linear-gradient(rgba(0,0,0,0.09),rgba(0,0,0,0));"></div>
<div class="a" style="left:616px;top:722px;width:1420px;height:2px;background:#e4e4e4;"></div>
<div class="a" style="left:616px;top:724px;width:1420px;height:68px;background:#f3f3f3;"></div>
<div class="a" style="left:616px;top:724px;width:301px;height:68px;background:#ffffff;"></div>
<svg style="left:641px;top:748px;" width="17" height="18" viewBox="0 0 17 18"><g fill="#a3a3a3"><rect x="0" y="0.3" width="16.5" height="1.9"/><rect x="0" y="5.3" width="9.5" height="1.9"/><rect x="0" y="10.3" width="16.5" height="1.9"/><rect x="0" y="15.3" width="12" height="1.9"/></g></svg>
<div class="t" style="left:670px;top:745.34px;font-size:25px;color:#333333;font-family:'Liberation Sans',sans-serif;letter-spacing:0.43px;">2 SARIF Results</div>
<svg style="left:1930px;top:741px;" width="30" height="30" viewBox="0 0 30 30"><rect x="2.5" y="2.5" width="25" height="25" rx="3.5" fill="none" stroke="#424242" stroke-width="1.8"/><line x1="15" y1="2.5" x2="15" y2="27.5" stroke="#424242" stroke-width="1.8"/></svg>
<svg style="left:1980px;top:751px;" width="40" height="12" viewBox="0 0 40 12"><circle cx="6" cy="6" r="2.2" fill="#424242"/><circle cx="16" cy="6" r="2.2" fill="#424242"/><circle cx="26" cy="6" r="2.2" fill="#424242"/></svg>
<div class="a" style="left:616px;top:792px;width:1420px;height:852px;background:#ffffff;"></div>
<div class="t" style="left:662px;top:815.53px;font-size:23px;color:#333333;font-family:'Liberation Sans',sans-serif;letter-spacing:-0.69px;">LOCATIONS</div>
<div class="a" style="left:799.0px;top:809.0px;width:36px;height:36px;border-radius:50%;background:#c5c5c5;"></div>
<div class="t" style="left:799.0px;top:814.5px;width:36px;text-align:center;font-size:24px;line-height:24px;color:#333;">2</div>
<div class="a" style="left:662px;top:853.5px;width:173px;height:2.2px;background:#333333;"></div>
<div class="t" style="left:875px;top:815.53px;font-size:23px;color:#8a8a8a;font-family:'Liberation Sans',sans-serif;letter-spacing:-1.25px;">RULES</div>
<div class="a" style="left:958.0px;top:809.0px;width:36px;height:36px;border-radius:50%;background:#c5c5c5;"></div>
<div class="t" style="left:958.0px;top:814.5px;width:36px;text-align:center;font-size:24px;line-height:24px;color:#333;">2</div>
<div class="t" style="left:1034px;top:815.53px;font-size:23px;color:#8a8a8a;font-family:'Liberation Sans',sans-serif;letter-spacing:-1px;">LOGS</div>
<div class="a" style="left:1106.0px;top:809.0px;width:36px;height:36px;border-radius:50%;background:#c5c5c5;"></div>
<div class="t" style="left:1106.0px;top:814.5px;width:36px;text-align:center;font-size:24px;line-height:24px;color:#333;">1</div>
<div class="t" style="left:1381px;top:816.48px;font-size:24px;color:#737373;font-family:'Liberation Sans',sans-serif;">Filter results</div>
<svg style="left:1822px;top:815px;" width="32" height="28" viewBox="0 0 32 28"><path d="M2.5 2.5 H29.5 L17.8 14.3 V25.5 H14.2 V14.3 Z" fill="none" stroke="#111" stroke-width="2" stroke-linejoin="miter"/></svg>
<svg style="left:1907px;top:813px;" width="28" height="28" viewBox="0 0 28 28"><rect x="10" y="2.5" width="16" height="16" rx="2.5" fill="#fff" stroke="#111" stroke-width="2"/><rect x="3" y="8.5" width="15.5" height="17" rx="2.5" fill="#fff" stroke="#111" stroke-width="2"/><line x1="6.5" y1="16.8" x2="14.5" y2="16.8" stroke="#111" stroke-width="2"/></svg>
<svg style="left:1975px;top:813px;" width="34" height="28" viewBox="0 0 34 28"><path d="M3.5 24.5 V3 H13 L15 5 H24.5 V10" fill="none" stroke="#111" stroke-width="2" stroke-linejoin="round"/><path d="M3.5 24.5 L8.5 11.5 H14.5 L16.5 9.5 H31 L26.5 24.5 Z" fill="none" stroke="#111" stroke-width="2" stroke-linejoin="round"/></svg>
<div class="t" style="left:702px;top:882.99px;font-size:26px;color:#8a8a8a;font-family:'Liberation Sans',sans-serif;letter-spacing:0.5px;">Line</div>
<svg style="left:757px;top:885px;" width="26" height="24" viewBox="0 0 26 24"><path d="M12.5 1 V22 M3 12.5 L12.5 22 L22 12.5" fill="none" stroke="#8a8a8a" stroke-width="1.9"/></svg>
<div class="t" style="left:846px;top:882.99px;font-size:26px;color:#8a8a8a;font-family:'Liberation Sans',sans-serif;letter-spacing:0.6px;">Message</div>
<div class="a" style="left:618px;top:928px;width:1418px;height:44px;background:#e8e8e8;"></div>
<div class="a" style="left:618px;top:972px;width:1418px;height:44px;background:#2a5cb8;"></div>
<svg style="left:662px;top:943.5px;" width="24" height="14" viewBox="0 0 24 14"><polyline points="2,2 12,12 22,2" fill="none" stroke="#222" stroke-width="1.8"/></svg>
<div class="t" style="left:702px;top:937.99px;font-size:26px;color:#000000;font-family:'Liberation Sans',sans-serif;letter-spacing:0.87px;">buffer_overflow.h</div>
<div class="t" style="left:925px;top:937.99px;font-size:26px;color:#8a8a8a;font-family:'Liberation Sans',sans-serif;letter-spacing:1.4px;">src</div>
<div class="a" style="left:975.0px;top:932.0px;width:36px;height:36px;border-radius:50%;background:#c5c5c5;"></div>
<div class="t" style="left:975.0px;top:937.5px;width:36px;text-align:center;font-size:24px;line-height:24px;color:#333;">1</div>
<svg style="left:703px;top:979px;" width="30" height="28" viewBox="0 0 30 28"><path d="M14.5 2.2 L27.5 25.5 H1.5 Z" fill="none" stroke="#bf8b1a" stroke-width="2" stroke-linejoin="round"/><rect x="13.4" y="9.5" width="2.2" height="9" fill="#bf8b1a"/><rect x="13.4" y="20.5" width="2.2" height="2.3" fill="#bf8b1a"/></svg>
<div class="t" style="left:746px;top:981.99px;font-size:26px;color:#000000;font-family:'Liberation Sans',sans-serif;letter-spacing:1.6px;">20</div>
<div class="t" style="left:846px;top:981.99px;font-size:26px;color:#000000;font-family:'Liberation Sans',sans-serif;letter-spacing:0.63px;">User-controlled size argument in call to <span style="color:#2f66aa">memcpy</span> copying to a <span style="color:#2f66aa">stack buffer</span></div>
<svg style="left:662px;top:1031.5px;" width="24" height="14" viewBox="0 0 24 14"><polyline points="2,2 12,12 22,2" fill="none" stroke="#222" stroke-width="1.8"/></svg>
<div class="t" style="left:702px;top:1025.99px;font-size:26px;color:#000000;font-family:'Liberation Sans',sans-serif;letter-spacing:0.87px;">use_after_free.h</div>
<div class="t" style="left:912px;top:1025.99px;font-size:26px;color:#8a8a8a;font-family:'Liberation Sans',sans-serif;letter-spacing:1.4px;">src</div>
<div class="a" style="left:963.0px;top:1020.0px;width:36px;height:36px;border-radius:50%;background:#c5c5c5;"></div>
<div class="t" style="left:963.0px;top:1025.5px;width:36px;text-align:center;font-size:24px;line-height:24px;color:#333;">1</div>
<svg style="left:703px;top:1067px;" width="30" height="28" viewBox="0 0 30 28"><path d="M14.5 2.2 L27.5 25.5 H1.5 Z" fill="none" stroke="#bf8b1a" stroke-width="2" stroke-linejoin="round"/><rect x="13.4" y="9.5" width="2.2" height="9" fill="#bf8b1a"/><rect x="13.4" y="20.5" width="2.2" height="2.3" fill="#bf8b1a"/></svg>
<div class="t" style="left:746px;top:1069.99px;font-size:26px;color:#000000;font-family:'Liberation Sans',sans-serif;letter-spacing:1.6px;">28</div>
<div class="t" style="left:846px;top:1069.99px;font-size:26px;color:#000000;font-family:'Liberation Sans',sans-serif;letter-spacing:0.57px;">The dangling pointer is used here: <span style="color:#3874c0">fn</span> The dangling pointer is used here: <span style="color:#3874c0">fn</span> The dangling pointer i...</div>
<div class="a" style="left:618px;top:1264px;width:1418px;height:2px;background:#e5e5e5;"></div>
<div class="t" style="left:661.5px;top:1290.03px;font-size:23px;color:#8a8a8a;font-family:'Liberation Sans',sans-serif;letter-spacing:-0.53px;">INFO</div>
<div class="t" style="left:753.5px;top:1290.03px;font-size:23px;color:#333333;font-family:'Liberation Sans',sans-serif;letter-spacing:-0.88px;">ANALYSIS STEPS</div>
<div class="a" style="left:948.0px;top:1283.0px;width:36px;height:36px;border-radius:50%;background:#c5c5c5;"></div>
<div class="t" style="left:948.0px;top:1288.5px;width:36px;text-align:center;font-size:24px;line-height:24px;color:#333;">4</div>
<div class="a" style="left:754px;top:1327.5px;width:230px;height:2.2px;background:#333333;"></div>
<div class="t" style="left:1023px;top:1290.03px;font-size:23px;color:#8a8a8a;font-family:'Liberation Sans',sans-serif;letter-spacing:-1px;">STACKS</div>
<div class="a" style="left:1120.5px;top:1283.0px;width:36px;height:36px;border-radius:50%;background:#c5c5c5;"></div>
<div class="t" style="left:1120.5px;top:1288.5px;width:36px;text-align:center;font-size:24px;line-height:24px;color:#333;">0</div>
<div class="t" style="left:661px;top:1369.99px;font-size:26px;color:#000000;font-family:'Liberation Sans',sans-serif;letter-spacing:0.5px;">args</div>
<div class="a" style="left:1918px;top:1367px;width:80px;height:32px;border-radius:6px;background:#c5c5c5;"></div>
<div class="t" style="left:1918px;top:1369.99px;width:80px;text-align:center;font-size:26px;color:#333;letter-spacing:0.5px;">17:73</div>
<div class="t" style="right:130.5px;top:1369.99px;font-size:26px;color:#8a8a8a;letter-spacing:0.6px;">vuln_driver.c</div>
<div class="t" style="left:661px;top:1413.99px;font-size:26px;color:#000000;font-family:'Liberation Sans',sans-serif;letter-spacing:0.5px;">args</div>
<div class="a" style="left:1911px;top:1411px;width:87px;height:32px;border-radius:6px;background:#c5c5c5;"></div>
<div class="t" style="left:1911px;top:1413.99px;width:87px;text-align:center;font-size:26px;color:#333;letter-spacing:0.5px;">28:20</div>
<div class="t" style="right:137.5px;top:1413.99px;font-size:26px;color:#8a8a8a;letter-spacing:0.6px;">vuln_driver.c</div>
<div class="t" style="left:661px;top:1457.99px;font-size:26px;color:#000000;font-family:'Liberation Sans',sans-serif;letter-spacing:0.5px;">buff</div>
<div class="a" style="left:1926px;top:1455px;width:72px;height:32px;border-radius:6px;background:#c5c5c5;"></div>
<div class="t" style="left:1926px;top:1457.99px;width:72px;text-align:center;font-size:26px;color:#333;letter-spacing:0.5px;">6:42</div>
<div class="t" style="right:122.5px;top:1457.99px;font-size:26px;color:#8a8a8a;letter-spacing:0.6px;">buffer_overflow.h</div>
<div class="t" style="left:661px;top:1501.99px;font-size:26px;color:#000000;font-family:'Liberation Sans',sans-serif;letter-spacing:0.5px;">size</div>
<div class="a" style="left:1910px;top:1499px;width:88px;height:32px;border-radius:6px;background:#c5c5c5;"></div>
<div class="t" style="left:1910px;top:1501.99px;width:88px;text-align:center;font-size:26px;color:#333;letter-spacing:0.5px;">20:43</div>
<div class="t" style="right:138.5px;top:1501.99px;font-size:26px;color:#8a8a8a;letter-spacing:0.6px;">buffer_overflow.h</div>
<div class="a" style="left:0px;top:1644px;width:2036px;height:42px;background:#3477c6;"></div>
<div class="a" style="left:0px;top:1644px;width:54px;height:42px;background:#3a7d5c;"></div>
<svg style="left:8px;top:1652px;" width="26" height="26" viewBox="0 0 26 26"><path d="M3 9.6 L11.3 16.5 L3 23.4" fill="none" stroke="#fff" stroke-width="1.9"/><path d="M20.9 4 L14 9.6 L20.9 15.2" fill="none" stroke="#fff" stroke-width="1.9"/></svg>
<svg style="left:73px;top:1648px;" width="22" height="36" viewBox="0 0 22 36"><circle cx="11" cy="17.5" r="5.8" fill="none" stroke="#fff" stroke-width="2.2"/><path d="M11 2 V11.7 M11 23.3 V34" stroke="#fff" stroke-width="2.2"/></svg>
<div class="t" style="left:104px;top:1654.88px;font-size:24px;color:#ffffff;font-family:'Liberation Sans',sans-serif;letter-spacing:1.33px;">2bbfdadd*</div>
<svg style="left:256px;top:1652px;" width="32" height="28" viewBox="0 0 32 28"><path d="M6.5 13.5 A9.8 9.8 0 0 1 25.8 12.5 M25.5 15 A9.8 9.8 0 0 1 6.2 16" fill="none" stroke="#fff" stroke-width="2"/><path d="M21.5 10.5 L25.8 14.5 L29.5 9.5" fill="none" stroke="#fff" stroke-width="2" stroke-linejoin="round"/><path d="M2.5 19 L6.2 13.5 L10.5 17.5" fill="none" stroke="#fff" stroke-width="2" stroke-linejoin="round"/></svg>
<svg style="left:318px;top:1652px;" width="28" height="28" viewBox="0 0 28 28"><circle cx="14" cy="14" r="11" fill="none" stroke="#fff" stroke-width="1.9"/><path d="M9.5 9.5 L18.5 18.5 M18.5 9.5 L9.5 18.5" stroke="#fff" stroke-width="1.9"/></svg>
<div class="t" style="left:354px;top:1654.88px;font-size:24px;color:#ffffff;font-family:'Liberation Sans',sans-serif;">3</div>
<svg style="left:376px;top:1652px;" width="27" height="27" viewBox="0 0 27 27"><path d="M13.5 2.5 L25 23.5 H2 Z" fill="none" stroke="#fff" stroke-width="1.9" stroke-linejoin="round"/><rect x="12.4" y="9.5" width="2.2" height="8" fill="#fff"/><rect x="12.4" y="19" width="2.2" height="2.2" fill="#fff"/></svg>
<div class="t" style="left:410px;top:1654.88px;font-size:24px;color:#ffffff;font-family:'Liberation Sans',sans-serif;">2</div>
<svg style="left:458px;top:1651px;" width="26" height="28" viewBox="0 0 26 28"><path d="M13 2 L23.5 5.5 V13 Q23.5 22 13 26.5 Q2.5 22 2.5 13 V5.5 Z" fill="none" stroke="#fff" stroke-width="1.9" stroke-linejoin="round"/><circle cx="13" cy="12" r="2.8" fill="#fff"/><rect x="11.9" y="13" width="2.2" height="6" fill="#fff"/></svg>
<div class="t" style="left:491px;top:1654.88px;font-size:24px;color:#ffffff;font-family:'Liberation Sans',sans-serif;letter-spacing:0.52px;">Sarif</div>
<svg style="left:1360px;top:1652px;" width="34" height="30" viewBox="0 0 34 30"><path d="M2 21.5 C2 17 4 14.5 6.5 13.5 L27 13.5 C29.5 14.5 30.8 17 30.8 21.5 C30.8 25.5 24 28.2 16.4 28.2 C8.8 28.2 2 25.5 2 21.5 Z" fill="#fff"/><path d="M7.4 15.2 H25.4 V23.6 Q16.4 26.8 7.4 23.6 Z" fill="#3477c6"/><rect x="6.4" y="4.6" width="9" height="11" rx="4" fill="#3477c6" stroke="#fff" stroke-width="2.8"/><rect x="18.4" y="4.6" width="9" height="11" rx="4" fill="#3477c6" stroke="#fff" stroke-width="2.8"/><rect x="12" y="17.3" width="2.8" height="5.7" rx="1.4" fill="#fff"/><rect x="18.1" y="17.3" width="2.8" height="5.7" rx="1.4" fill="#fff"/></svg>
<div class="t" style="left:1422px;top:1654.68px;font-size:24px;color:#ffffff;font-family:'Liberation Sans',sans-serif;letter-spacing:0.8px;">No matches found</div>
<div class="t" style="left:1661px;top:1654.68px;font-size:24px;color:#ffffff;font-family:'Liberation Sans',sans-serif;letter-spacing:0.76px;">CodeQL CLI v2.12.6</div>
<svg style="left:1922px;top:1650px;" width="32" height="32" viewBox="0 0 32 32"><path d="M10.3 8.5 V4.2 H27.6 V15.7 H22.2 L18.6 19.6 V16.6" fill="none" stroke="#fff" stroke-width="1.8" stroke-linejoin="miter"/><circle cx="12" cy="14.7" r="4.3" fill="none" stroke="#fff" stroke-width="1.8"/><path d="M4.3 28 Q5 20.2 12 20.2 Q19 20.2 19.7 28" fill="none" stroke="#fff" stroke-width="1.8"/></svg>
<svg style="left:1984px;top:1650px;" width="28" height="32" viewBox="0 0 28 32"><path d="M4.5 24.6 L5.8 21 Q6.8 18 6.8 13 Q6.8 4.2 14 4.2 Q21.2 4.2 21.2 13 Q21.2 18 22.2 21 L23.5 24.6 Z" fill="none" stroke="#fff" stroke-width="1.9" stroke-linejoin="round"/><path d="M11.2 25.6 A2.8 2.8 0 0 0 16.8 25.6" fill="none" stroke="#fff" stroke-width="1.9"/></svg>
<svg style="left:2006px;top:1656px;" width="30" height="30" viewBox="0 0 30 30"><path d="M22.5 30 Q28 29 30 25.5 L30 30 Z" fill="#c6c6c6"/></svg>
</body></html>
